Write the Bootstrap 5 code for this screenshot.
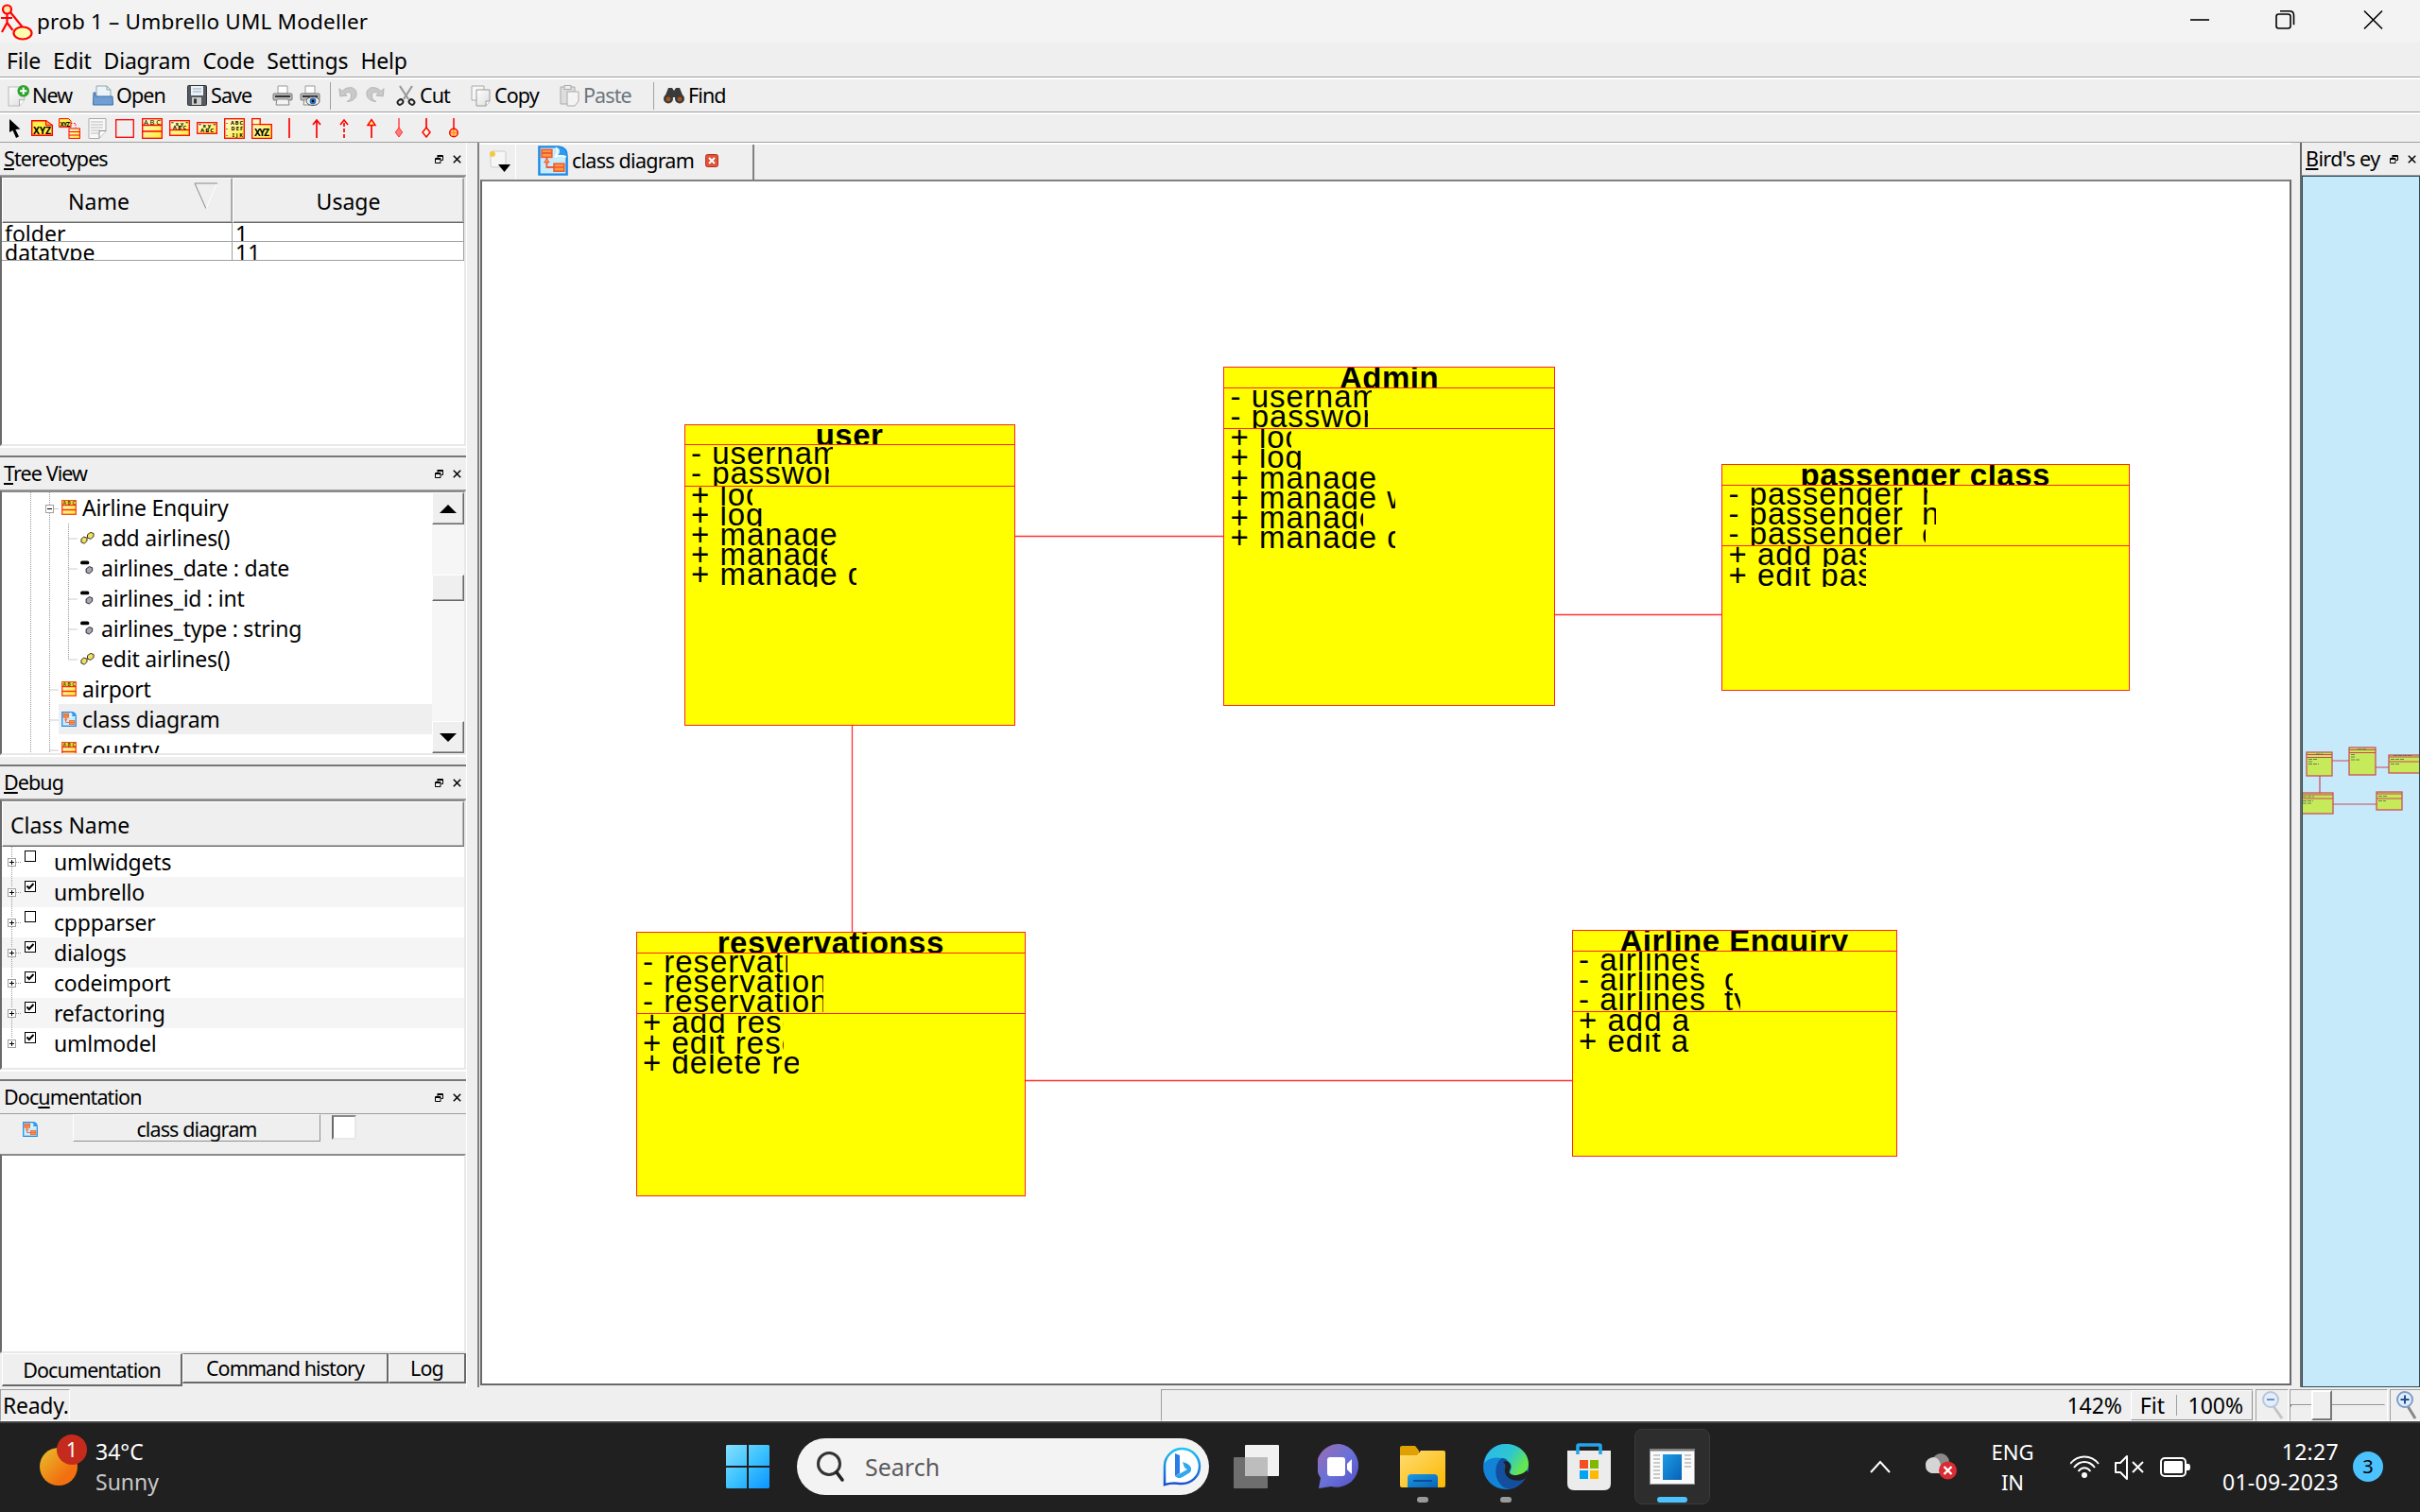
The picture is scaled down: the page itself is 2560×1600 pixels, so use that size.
<!DOCTYPE html>
<html lang="en">
<head>
<meta charset="utf-8">
<title>prob 1 – Umbrello UML Modeller</title>
<link href="https://cdn.jsdelivr.net/npm/bootstrap@5.3.0/dist/css/bootstrap.min.css" rel="stylesheet">
<style>
body{width:2560px;height:1600px;overflow:hidden;background:#efefef;color:#000;font-family:"Noto Sans","Open Sans",sans-serif;font-size:23px;line-height:32px}
svg{display:block;flex:none}
.tight{font-size:21.5px;letter-spacing:-.9px}
/* title, menu and tool bars */
.titlebar{height:45px;background:#f3f3f3}
.titlebar .caption{font-size:22.5px;letter-spacing:.2px;margin-left:4px}
.menus{height:37px;border-bottom:1px solid #a0a0a0;padding:3px 0 0 7px;gap:13px;letter-spacing:-.18px}
.bar1{height:37px;border-top:2px solid #fff;border-bottom:1px solid #a0a0a0;padding-left:8px}
.bar2{height:32px;border-top:2px solid #fff;border-bottom:1px solid #a0a0a0;padding-left:1px}
.tool{gap:4px;height:34px;flex:none}
.bar2 .tool{width:29px}
.w-new{width:90px}.w-open{width:100px}.w-save{width:90px}.w-ic{width:29px}.w-cut{width:79px}.w-copy{width:94px}.w-paste{width:99px}
.w-new,.w-open{gap:3px}
.vsep{width:1px;height:29px;background:#a0a0a0;flex:none}
#sepa{margin:0 7px 0 3px}
#sepb{margin-right:6px}
/* dock widgets */
.workarea{height:1317px}
.leftdock{width:494px;border-right:1px solid #fff;flex:none}
.dockhead{height:35px;padding:0 5px 0 4px;border-bottom:1px solid #a0a0a0;flex:none}
.dockhead .btns{gap:10px}
.sunken{border:2px solid;border-color:#8a8a8a #e8e8e8 #e8e8e8 #6a6a6a;background:#fff;width:493px;flex:none}
.split{height:12px;border-top:2px solid #fff;border-bottom:2px solid #777;flex:none}
.hdcell{background:#efefef;border:1px solid;border-color:#fff #808080 #696969 #fff;box-shadow:inset -1px -1px 0 #b0b0b0}
.hd48{height:48px;line-height:48px}
.strow{height:20px;line-height:22px;overflow:hidden;border-bottom:1px solid #a0a0a0;box-sizing:border-box}
.strow span{height:19px;overflow:hidden;padding-left:3px}
.c1{width:244px;border-right:1px solid #a0a0a0;box-sizing:border-box}
.c2{width:245px;border-right:1px solid #a0a0a0;box-sizing:border-box}
.namecol{padding-left:69px}
.trow{height:32px;padding-left:63px;gap:6px;line-height:34px;letter-spacing:-.22px}
.trow.sub{padding-left:83px;gap:7px}
.trow.sel{background:linear-gradient(#efefef,#efefef) 60px 0 no-repeat}
.scroller{width:34px;background:#f6f6f6;flex:none}
.sbtn{height:34px;background:#efefef;border:1px solid;border-color:#fff #696969 #696969 #fff;box-shadow:inset -1px -1px 0 #a0a0a0}
.thumb{height:28px}
.drow{height:32px;padding-left:6px;line-height:33px;letter-spacing:-.2px}
.drow:nth-child(even){background:#f5f5f5}
.chk{width:12px;height:12px;border:1px solid #000;margin:4px 0 0 9px;align-self:flex-start;background:#fff}
.lbl{margin-left:19px}
.raised{border:1px solid;border-color:#fff #909090 #909090 #fff;background:#efefef}
.btab{height:32px;line-height:30px;border:1px solid;border-color:#777 #696969 #696969 #fff;border-bottom-width:2px;border-right-width:2px;text-align:center}
#stereo{height:286px}
#tree{height:280px}
#thumb{margin-top:53px}
#dbg{height:286px}
#docrow{height:44px}
#docname{margin-left:37px;width:262px;height:29px;line-height:29px}
#doccheck{width:26px;height:26px;margin-left:12px;margin-top:1px}
#doctext{height:211px}
#btabs{height:38px;padding:0 0 0 2px}
#t1{width:191px;height:35px;line-height:34px;border-top-color:#fff}
#t2{width:218px}#t3{width:82px}
/* document area */
.center{width:1919px;border-left:2px solid #808080;margin-left:11px;flex:none}
.doctabs{height:39px;border-top:2px solid #fff}
.doctab{width:253px;border-left:1px solid #fff;border-right:2px solid #808080;padding:0 0 3px 23px;gap:4px;letter-spacing:-.75px}
#tabfill{width:1626px}
.board{width:1916px;height:1276px;margin-left:1px;background:#fff;border:2px solid;border-color:#808080 #696969 #696969 #696969;position:relative;flex:none}
.bird{width:127px;margin-left:9px;border-left:2px solid #696969;flex:none}
.birdview{height:1282px;background:#c7eafa;border:1px solid #2b4a57}
.bird .dockhead{padding-right:4px}
#birdtitle{white-space:nowrap;overflow:hidden;width:84px;letter-spacing:-.6px}
/* class boxes on the diagram canvas */
.uml{position:absolute;background:#ff0;border:1px solid #f22;font-family:"Liberation Sans",Arial,sans-serif;font-size:33px;letter-spacing:1px;color:#000;box-sizing:border-box;white-space:pre}
.uml h6{font-size:33px;letter-spacing:.5px;font-weight:700;line-height:21.400px;height:20.8px;margin:0;overflow:hidden;text-align:center;color:#000}
.uml div{border-top:1px solid #f22}
.uml p{margin:0;height:21.2px;line-height:18.500px;padding-left:6.500px;overflow:hidden}
.wires{position:absolute;left:0;top:0}
#u1{left:213.500px;top:256.500px;width:350px;height:319px}
#u2{left:784px;top:196px;width:351px;height:359px}
#u3{left:1311px;top:299px;width:431.500px;height:239.500px}
#u4{left:162.500px;top:794px;width:412.500px;height:280px}
#u5{left:1152.500px;top:792px;width:344px;height:239.500px}
.k71{width:71px}.k81{width:81px}.k123{width:123px}.k128{width:125px}.k133{width:133px}.k147{width:147px}.k150{width:150px}.k152{width:152px}.k154{width:155px}.k156{width:156px}.k159{width:159px}.k163{width:164px}.k167{width:169px}.k171{width:171px}.k176{width:177px}.k181{width:181px}.k197{width:197px}.k215{width:215px}.k217{width:217px}.k225{width:226px}
/* status bar */
.statusbar{height:36px;padding-top:2px;border-bottom:1px solid #fff;margin-right:-3px}
.spanel{height:34px;border:1px solid;border-color:#a0a0a0 #fff #fff #a0a0a0;flex:none}
#ready{width:74px;padding-left:2px;letter-spacing:-.3px}
#zoompanel{width:1155px;margin-right:3px;border-right:0}
#fit{width:129px;height:32px;margin-left:9px;padding:0 3px}
#fsep{height:22px}
.zic{width:35px}
#slide{width:104px;margin:0 2px 0 1px;position:relative}
#groove{width:100px;height:3px;border-width:1px}
#knob{position:absolute;left:22px;top:0;width:22px;height:32px;border-width:2px;border-color:#fff #777 #777 #fff}
/* desktop task bar */
.taskbar{height:97px;background:#202020;border-top:2px solid #444;color:#fff;padding-bottom:4px}
.cell88{width:88px;height:80px;position:relative;flex:none}
.cell88 i{position:absolute;bottom:2px;left:38px;width:12px;height:6px;border-radius:3px;background:#9a9a9a}
.activeapp{width:80px;margin:0 4px;background:#2d2d2d;border:1px solid #3a3a3a;border-radius:8px}
.activeapp i{left:23px;width:32px;background:#4cc2ff;bottom:1px}
.searchbox{width:436px;height:60px;border-radius:30px;background:#f3f3f3;color:#5c5c5c;font-size:25px;margin:0 6px 0 29px;padding:0 8px 0 20px;flex:none}
.notif{width:32px;height:32px;border-radius:50%;background:#4cc2ff;color:#000;text-align:center;font-size:20px;margin-left:15px}
.weather{width:94px;padding-left:42px}
.temp{padding-left:7px}
.sky{color:#c8c8c8}
#winlogo{margin-left:auto}
#tray{width:747px;padding-left:165px;flex:none}
#cloud{margin-left:37px}
#lang{width:60px;margin:0 31px 0 29px;font-size:22px}
#clock{width:156px;letter-spacing:.3px}
</style>
<script src="https://cdn.jsdelivr.net/npm/bootstrap@5.3.0/dist/js/bootstrap.bundle.min.js"></script>
</head>
<body>
<svg width="0" height="0" class="position-absolute" aria-hidden="true">
<defs>
<linearGradient id="gy" x1="0" y1="0" x2="1" y2="1"><stop offset="0" stop-color="#fffde0"/><stop offset="1" stop-color="#ffee2a"/></linearGradient>
<linearGradient id="gw" x1="0" y1="0" x2="1" y2="1"><stop offset="0" stop-color="#fff"/><stop offset="1" stop-color="#ddd"/></linearGradient>
<linearGradient id="gs" x1="0" y1="0" x2="1" y2="1"><stop offset="0" stop-color="#e8c22d"/><stop offset=".7" stop-color="#f2700f"/></linearGradient>
<linearGradient id="gwin" x1="0" y1="0" x2="1" y2="1"><stop offset="0" stop-color="#86e0ff"/><stop offset=".5" stop-color="#3ec3ff"/><stop offset="1" stop-color="#0a94ff"/></linearGradient>
<linearGradient id="gbl" x1="0" y1="0" x2="1" y2="1"><stop offset="0" stop-color="#1a9be6"/><stop offset="1" stop-color="#0a62b5"/></linearGradient>
<linearGradient id="gchat" x1="0" y1="0" x2="1" y2="1"><stop offset="0" stop-color="#9d6bb0"/><stop offset=".5" stop-color="#6a72d8"/><stop offset="1" stop-color="#5350c8"/></linearGradient>
<linearGradient id="gfo" x1="0" y1="0" x2="1" y2="1"><stop offset="0" stop-color="#ffdc73"/><stop offset="1" stop-color="#fbb800"/></linearGradient>
<linearGradient id="ged" x1="0" y1="0" x2="1" y2=".5"><stop offset="0" stop-color="#2fb5f0"/><stop offset=".6" stop-color="#2cc7cf"/><stop offset="1" stop-color="#66e64e"/></linearGradient>
<linearGradient id="gbing" x1="0" y1="0" x2="0" y2="1"><stop offset="0" stop-color="#1fc4f0"/><stop offset="1" stop-color="#1b4fd0"/></linearGradient>
<symbol id="float" viewBox="0 0 9 9"><path d="M3 .5h5.500v5H6.500M3 1.500h5.500M.5 3.500h5.500v5h-5.500zM.5 4.500h5.500" fill="none" stroke="#000"/><path d="M3 0v3" stroke="#000"/></symbol>
<symbol id="shut" viewBox="0 0 9 9"><path d="M.8.8l7.400 7.400M8.200.8l-7.400 7.400" stroke="#000" stroke-width="1.500"/></symbol>
<symbol id="cls" viewBox="0 0 16 16"><rect x=".7" y=".7" width="14.600" height="14.600" fill="url(#gy)" stroke="#ff4a1c" stroke-width="1.400"/><path d="M.5 5.500h15M.5 10.500h15" stroke="#ff2a1c" stroke-width="1.300"/><rect x="1" y="1" width="14" height="4" fill="#e8d83a"/><text x="1.500" y="4.900" font-size="5" font-weight="700" textLength="13" fill="#5a4a00">ABC</text></symbol>
<symbol id="dia" viewBox="0 0 16 16"><path d="M.7.7h10.300c3 .3 4.300 2.200 4.300 5v9.600H.7z" fill="#c8ecfc" stroke="#1c8ae6" stroke-width="1.200"/><path d="M10 .7c2.500 1.300 1.500 4 .2 4.800 2-.6 4-.5 5.100.5C15.300 3 13.500.9 10 .7z" fill="#2f9bf0"/><path d="M9.500 1c1.500 2 .8 3.600-.5 5 2-.9 4-.8 6 0" fill="none" stroke="#fff" stroke-width=".7"/><rect x="2" y="2.200" width="5.400" height="4" fill="#ff9a3d" stroke="#ef5b35" stroke-width=".8"/><path d="M2 4h5.400M4.700 6.200v5.300h4" stroke="#ef5b35" stroke-width=".9" fill="none"/><path d="M3.300 9l1.400-2 1.400 2z" fill="#ff9a3d" stroke="#ef5b35" stroke-width=".5"/><rect x="8.500" y="9.600" width="5.400" height="4" fill="#ff9a3d" stroke="#ef5b35" stroke-width=".8"/><path d="M8.500 11.500h5.400" stroke="#ef5b35" stroke-width=".8"/></symbol>
<symbol id="meth" viewBox="0 0 16 16"><g fill="#f5e058" stroke="#222" stroke-width="1"><path d="M1 9.500l3-2.500 3.500 1.200v3.500L4.500 14.500l-3.500-1.400z"/><path d="M8 4.500L11.500 2l3.500 1.200v3.500l-3.500 2.800L8 8.100z"/></g></symbol>
<symbol id="attr" viewBox="0 0 16 16"><rect x="0" y="0" width="10" height="4" rx="2"/><path d="M6.500 9l3.500-2.500 3.500 1.200v3.700l-3.500 3-3.500-1.400z" fill="#a6a6b8" stroke="#222" stroke-width="1"/></symbol>
<symbol id="plus" viewBox="0 0 9 9"><rect x=".5" y=".5" width="8" height="8" fill="#fff" stroke="#a0a0a0"/><path d="M2 4.500h5M4.500 2v5" stroke="#000"/></symbol>
<symbol id="tick" viewBox="0 0 10 10"><path d="M1.500 4.500l2.300 2.500L8.500 2" fill="none" stroke="#000" stroke-width="2"/></symbol>
<symbol id="printer" viewBox="0 0 22 22"><path d="M6 1h10v8H6z" fill="#fff" stroke="#999"/><rect x="1" y="9" width="20" height="7" rx="1" fill="#bbb" stroke="#777"/><rect x="3" y="11" width="16" height="2" fill="#333"/><path d="M5 15h12l1 6H4z" fill="#f4f4f4" stroke="#888"/></symbol>
<symbol id="undo" viewBox="0 0 22 22"><path d="M1 3l1 9 8-1-3-2c4-3 8-2 8 2s-2 6-5 7c7 0 11-4 11-9S17 1 12 2C9 2.300 6 4 4.500 6z" fill="#c9c9c9" stroke="#b0b0b0"/></symbol>
</defs>
</svg>

<header class="titlebar d-flex align-items-center">
<svg width="35" height="41" viewBox="0 0 35 41"><g fill="none" stroke="#f00" stroke-width="2.200"><circle cx="7.500" cy="8" r="4.500" fill="#ffe9b0"/><path d="M7.500 12.500v10M1 17h12M7.500 22L2 32M7.500 22l6 8M11 11l13 16"/><ellipse cx="24" cy="33" rx="9.500" ry="6.500" fill="#ffffb0"/></g></svg>
<span class="caption">prob 1 – Umbrello UML Modeller</span>
<svg class="ms-auto me-4" width="220" height="45" viewBox="0 0 220 45"><g fill="none" stroke="#000" stroke-width="1.600"><path d="M1 21h20"/><rect x="92" y="15" width="15" height="15" rx="2.500"/><path d="M96 11.800h10c3 0 4.500 1.600 4.500 4.500v10"/><path d="M185 11.500l19 19M204 11.500l-19 19"/></g></svg>
</header>
<nav class="menus d-flex align-items-start"><span>File</span><span>Edit</span><span>Diagram</span><span>Code</span><span>Settings</span><span>Help</span></nav>

<div class="bar1 d-flex align-items-center tight">
<span class="tool w-new d-flex align-items-center"><svg width="23" height="23" viewBox="0 0 22 22"><path d="M1 2h16v13l-5 6H1z" fill="url(#gw)" stroke="#bbb"/><path d="M12 21v-6h5" fill="#fff" stroke="#aaa"/><circle cx="16" cy="6" r="6" fill="#2aa52a"/><path d="M12.500 6h7M16 2.500v7" stroke="#fff" stroke-width="2"/></svg>New</span>
<span class="tool w-open d-flex align-items-center"><svg width="22" height="22" viewBox="0 0 22 22"><path d="M4 1h11l4 4v9H4z" fill="#eef3fa" stroke="#8aa"/><path d="M15 1v4h4" fill="none" stroke="#8aa"/><path d="M1 8h2v4h18l.5 9H.5z" fill="#6f9fd3" stroke="#3e6ea6"/></svg>Open</span>
<span class="tool w-save d-flex align-items-center"><svg width="21" height="22" viewBox="0 0 21 22"><rect x=".5" y=".5" width="20" height="21" rx="1" fill="#555a62" stroke="#333"/><rect x="4" y="1" width="13" height="10" fill="#e9f2f7"/><path d="M6 4h9M6 7h9" stroke="#9ab"/><rect x="5" y="13" width="10" height="8" fill="#ccc"/><rect x="7" y="14.500" width="3" height="5" fill="#333"/></svg>Save</span>
<span class="tool w-ic d-flex align-items-center"><svg width="22" height="22"><use href="#printer"/></svg></span>
<span class="tool w-ic d-flex align-items-center"><svg width="22" height="22" viewBox="0 0 22 22"><use href="#printer"/><ellipse cx="14" cy="17" rx="7" ry="4.500" fill="#eee" stroke="#555"/><circle cx="14" cy="17" r="3.400" fill="#2d6fb5"/><circle cx="14" cy="17" r="1.200"/></svg></span>
<span class="vsep" id="sepa"></span>
<span class="tool w-ic d-flex align-items-center"><svg width="22" height="20"><use href="#undo"/></svg></span>
<span class="tool w-ic d-flex align-items-center me-1"><svg width="22" height="20" viewBox="0 0 22 22"><g transform="matrix(-1 0 0 1 22 0)"><use href="#undo" width="22" height="22"/></g></svg></span>
<span class="tool w-cut d-flex align-items-center"><svg width="21" height="22" viewBox="0 0 21 22"><path d="M4 1l9 14M17 1L8 15" stroke="#999" stroke-width="2.200"/><g fill="none" stroke="#222" stroke-width="2"><ellipse cx="4.500" cy="18" rx="3" ry="2.500" transform="rotate(-35 4.500 18)"/><ellipse cx="16.500" cy="18" rx="3" ry="2.500" transform="rotate(35 16.500 18)"/></g></svg>Cut</span>
<span class="tool w-copy d-flex align-items-center"><svg width="21" height="23" viewBox="0 0 21 23"><path d="M1 1h13v15H1z" fill="#f7f7f7" stroke="#aaa"/><path d="M6 5h14v12l-4 5H6z" fill="url(#gw)" stroke="#999"/><path d="M16 22v-5h4" fill="#fff" stroke="#999"/></svg>Copy</span>
<span class="tool w-paste d-flex align-items-center text-secondary"><svg width="21" height="23" viewBox="0 0 21 23"><path d="M1 2h15v18H1z" fill="#ddd" stroke="#aaa"/><rect x="5" y=".5" width="7" height="4" fill="#eee" stroke="#aaa"/><path d="M8 7h12v10l-4 5H8z" fill="#f4f4f4" stroke="#aaa"/></svg>Paste</span>
<span class="vsep" id="sepb"></span>
<span class="tool d-flex align-items-center ps-1"><svg width="22" height="18" viewBox="0 0 22 18"><g fill="#3a3a3a"><path d="M5 1h4l2 3 2-3h4l4 10H1z"/><circle cx="5" cy="12.500" r="5"/><circle cx="17" cy="12.500" r="5"/></g><circle cx="5" cy="13" r="2.400" fill="#a5531a"/><circle cx="17" cy="13" r="2.400" fill="#a5531a"/></svg>Find</span>
</div>

<div class="bar2 d-flex align-items-center">
<span class="tool d-flex align-items-center justify-content-center"><svg width="14" height="20" viewBox="0 0 14 20"><path d="M1 0v14l3.500-2 3.500 8 3-1.500-3.600-7.500 5-.5z"/></svg></span>
<span class="tool d-flex align-items-center justify-content-center"><svg width="23" height="17" viewBox="0 0 23 17"><path d="M.7.7h15l6.600 5v10.600H.7z" fill="#fff04a" stroke="#f00" stroke-width="1.400"/><path d="M15.500.7v5h6.500" fill="#ff9a50" stroke="#f00"/><text x="2" y="14.500" font-size="10.500" font-weight="700" textLength="19">XYZ</text></svg></span>
<span class="tool d-flex align-items-center justify-content-center"><svg width="23" height="22" viewBox="0 0 23 22"><path d="M.6.6h10l2.400 2.500v6.500H.6z" fill="#fff04a" stroke="#f00"/><text x="1.500" y="8.500" font-size="6.500" font-weight="700" textLength="10.500">XYZ</text><path d="M13 5.500h5v5" stroke="#f00" stroke-dasharray="1.500 1.500" fill="none"/><rect x="11" y="11" width="11.400" height="10.400" fill="url(#gy)" stroke="#f00"/><path d="M11 14.500h11M11 18h11" stroke="#f00"/></svg></span>
<span class="tool d-flex align-items-center justify-content-center"><svg width="20" height="22" viewBox="0 0 20 22"><path d="M1 .5h18v13l-7 8H1z" fill="#f8f8f8" stroke="#aaa"/><path d="M3 4h13M3 7h13M3 10h13M3 13h10M3 16h8" stroke="#bbb"/><path d="M12 21v-7.500h7" fill="#fff" stroke="#888"/></svg></span>
<span class="tool d-flex align-items-center justify-content-center"><svg width="20" height="20"><rect x=".7" y=".7" width="18.600" height="18.600" fill="none" stroke="#f00" stroke-width="1.300"/></svg></span>
<span class="tool d-flex align-items-center justify-content-center"><svg width="22" height="22" viewBox="0 0 22 22"><rect x=".7" y=".7" width="20.600" height="20.600" fill="url(#gy)" stroke="#f00" stroke-width="1.300"/><path d="M1 7.500h20M1 14h20" stroke="#f00" stroke-width="1.300"/><text x="2" y="7" font-size="7.500" textLength="18">ABC</text></svg></span>
<span class="tool d-flex align-items-center justify-content-center"><svg width="22" height="17" viewBox="0 0 22 17"><rect x=".7" y=".7" width="20.600" height="15.600" fill="url(#gy)" stroke="#f00" stroke-width="1.300"/><path d="M1 10.500h20" stroke="#f00" stroke-width="1.300"/><text x="2" y="5.500" font-size="5.500" font-weight="700" textLength="18">"xy"</text><text x="4" y="9.600" font-size="5.500" font-weight="700" textLength="14">ABC</text></svg></span>
<span class="tool d-flex align-items-center justify-content-center"><svg width="22" height="13" viewBox="0 0 22 13"><rect x=".7" y=".7" width="20.600" height="11.600" fill="url(#gy)" stroke="#f00" stroke-width="1.300"/><text x="2" y="6" font-size="6" font-weight="700" textLength="18">"xy"</text><text x="4" y="11.300" font-size="6" font-weight="700" textLength="14">ABC</text></svg></span>
<span class="tool d-flex align-items-center justify-content-center"><svg width="22" height="22" viewBox="0 0 22 22"><rect x=".7" y=".7" width="20.600" height="20.600" fill="url(#gy)" stroke="#f00" stroke-width="1.300"/><g font-size="5.500" font-weight="700"><text x="2" y="6.500" textLength="18">- ABC</text><text x="2" y="13" textLength="18">- DEF</text><text x="2" y="19.500" textLength="18">- IJK</text></g></svg></span>
<span class="tool d-flex align-items-center justify-content-center"><svg width="22" height="22" viewBox="0 0 22 22"><path d="M.7.7h8.500v6h12.100v14.600H.7z" fill="url(#gy)" stroke="#f00" stroke-width="1.300"/><path d="M.7 6.700h9" stroke="#f00"/><text x="3" y="18.500" font-size="10" font-weight="700" textLength="16">XYZ</text></svg></span>
<span class="tool d-flex align-items-center justify-content-center"><svg width="12" height="21"><path d="M6 0v21" stroke="#f00" stroke-width="1.700"/></svg></span>
<span class="tool d-flex align-items-center justify-content-center"><svg width="12" height="21"><path d="M6 21V2M2 7l4-5 4 5" stroke="#f00" stroke-width="1.700" fill="none"/></svg></span>
<span class="tool d-flex align-items-center justify-content-center"><svg width="12" height="21"><path d="M6 21V2" stroke="#f00" stroke-width="1.700" stroke-dasharray="4 2"/><path d="M2 7l4-5 4 5" stroke="#f00" stroke-width="1.700" fill="none"/></svg></span>
<span class="tool d-flex align-items-center justify-content-center"><svg width="12" height="21"><path d="M6 21V7" stroke="#f00" stroke-width="1.700"/><path d="M2 7.500l4-6 4 6z" stroke="#f00" stroke-width="1.500" fill="#ff6"/></svg></span>
<span class="tool d-flex align-items-center justify-content-center"><svg width="12" height="21"><path d="M6 0v11" stroke="#f44" stroke-width="1.500"/><path d="M6 10l3.700 5L6 20l-3.700-5z" stroke="#f33" fill="#ff7a7a"/></svg></span>
<span class="tool d-flex align-items-center justify-content-center"><svg width="12" height="21"><path d="M6 0v11" stroke="#f00" stroke-width="1.700"/><path d="M6 10l4 5-4 5-4-5z" stroke="#f00" stroke-width="1.500" fill="#ffd"/></svg></span>
<span class="tool d-flex align-items-center justify-content-center"><svg width="12" height="21"><path d="M6 0v20M2 15.500h8" stroke="#f00" stroke-width="1.500"/><circle cx="6" cy="15.500" r="4.300" stroke="#f00" stroke-width="1.400" fill="#ffcf40" fill-opacity=".7"/></svg></span>
</div>

<main class="workarea d-flex">
<aside class="leftdock d-flex flex-column">
  <div class="dockhead d-flex align-items-center justify-content-between tight"><span><u>S</u>tereotypes</span><span class="btns d-flex"><svg width="9" height="9"><use href="#float"/></svg><svg width="9" height="9"><use href="#shut"/></svg></span></div>
  <div class="sunken" id="stereo">
    <div class="d-flex hd48"><div class="hdcell c1 namecol d-flex justify-content-between"><span>Name</span><svg class="me-2" width="34" height="44"><path d="M3 5h24" stroke="#888"/><path d="M3 5l12 27" stroke="#888"/><path d="M15 32L26 6" stroke="#fff"/></svg></div><div class="hdcell c2 text-center">Usage</div></div>
    <div class="strow d-flex"><span class="c1">folder</span><span class="c2">1</span></div>
    <div class="strow d-flex"><span class="c1">datatype</span><span class="c2">11</span></div>
  </div>
  <div class="split"></div>
  <div class="dockhead d-flex align-items-center justify-content-between tight"><span><u>T</u>ree View</span><span class="btns d-flex"><svg width="9" height="9"><use href="#float"/></svg><svg width="9" height="9"><use href="#shut"/></svg></span></div>
  <div class="sunken d-flex overflow-hidden" id="tree">
    <div class="flex-grow-1 position-relative">
      <svg class="position-absolute top-0 start-0" width="90" height="276"><g fill="none" stroke="#999" stroke-dasharray="1 1"><path d="M30.500 0v276M50.500 0v276M70.500 33v144M70.500 49h10M70.500 81h10M70.500 113h10M70.500 145h10M70.500 177h10M50.500 17.500h10M50.500 209h10M50.500 241h10M50.500 273h10"/></g><rect x="46.500" y="13.500" width="8" height="8" fill="#fff" stroke="#a0a0a0"/><path d="M48 17.500h5" stroke="#000"/></svg>
      <div class="trow d-flex align-items-center"><svg width="16" height="16"><use href="#cls"/></svg>Airline Enquiry</div>
      <div class="trow sub d-flex align-items-center"><svg width="15" height="16"><use href="#meth"/></svg>add airlines()</div>
      <div class="trow sub d-flex align-items-center"><svg width="15" height="16"><use href="#attr"/></svg>airlines_date : date</div>
      <div class="trow sub d-flex align-items-center"><svg width="15" height="16"><use href="#attr"/></svg>airlines_id : int</div>
      <div class="trow sub d-flex align-items-center"><svg width="15" height="16"><use href="#attr"/></svg>airlines_type : string</div>
      <div class="trow sub d-flex align-items-center"><svg width="15" height="16"><use href="#meth"/></svg>edit airlines()</div>
      <div class="trow d-flex align-items-center"><svg width="16" height="16"><use href="#cls"/></svg>airport</div>
      <div class="trow sel d-flex align-items-center"><svg width="16" height="16"><use href="#dia"/></svg>class diagram</div>
      <div class="trow d-flex align-items-center"><svg width="16" height="16"><use href="#cls"/></svg>country</div>
    </div>
    <div class="scroller d-flex flex-column">
      <div class="sbtn d-flex align-items-center justify-content-center"><svg width="18" height="9"><path d="M0 9l9-9 9 9z"/></svg></div>
      <div class="sbtn thumb" id="thumb"></div>
      <div class="sbtn mt-auto d-flex align-items-center justify-content-center"><svg width="18" height="9"><path d="M0 0l9 9 9-9z"/></svg></div>
    </div>
  </div>
  <div class="split"></div>
  <div class="dockhead d-flex align-items-center justify-content-between tight"><span><u>D</u>ebug</span><span class="btns d-flex"><svg width="9" height="9"><use href="#float"/></svg><svg width="9" height="9"><use href="#shut"/></svg></span></div>
  <div class="sunken" id="dbg">
    <div class="hdcell hd48 ps-2">Class Name</div>
    <div class="position-relative">
      <div class="drow d-flex align-items-center"><svg width="9" height="9"><use href="#plus"/></svg><span class="chk"></span><span class="lbl">umlwidgets</span></div>
      <div class="drow d-flex align-items-center"><svg width="9" height="9"><use href="#plus"/></svg><span class="chk"><svg width="10" height="10"><use href="#tick"/></svg></span><span class="lbl">umbrello</span></div>
      <div class="drow d-flex align-items-center"><svg width="9" height="9"><use href="#plus"/></svg><span class="chk"></span><span class="lbl">cppparser</span></div>
      <div class="drow d-flex align-items-center"><svg width="9" height="9"><use href="#plus"/></svg><span class="chk"><svg width="10" height="10"><use href="#tick"/></svg></span><span class="lbl">dialogs</span></div>
      <div class="drow d-flex align-items-center"><svg width="9" height="9"><use href="#plus"/></svg><span class="chk"><svg width="10" height="10"><use href="#tick"/></svg></span><span class="lbl">codeimport</span></div>
      <div class="drow d-flex align-items-center"><svg width="9" height="9"><use href="#plus"/></svg><span class="chk"><svg width="10" height="10"><use href="#tick"/></svg></span><span class="lbl">refactoring</span></div>
      <div class="drow d-flex align-items-center"><svg width="9" height="9"><use href="#plus"/></svg><span class="chk"><svg width="10" height="10"><use href="#tick"/></svg></span><span class="lbl">umlmodel</span></div>
      <svg class="position-absolute top-0 start-0" width="22" height="204"><path d="M10.500 0v11M10.500 21v22M10.500 53v22M10.500 85v22M10.500 117v22M10.500 149v22M10.500 181v22M15 16.500h5M15 48.500h5M15 80.500h5M15 112.500h5M15 144.500h5M15 176.500h5" stroke="#999" stroke-dasharray="1 1"/></svg>
    </div>
  </div>
  <div class="split"></div>
  <div class="dockhead d-flex align-items-center justify-content-between tight"><span>Doc<u>u</u>mentation</span><span class="btns d-flex"><svg width="9" height="9"><use href="#float"/></svg><svg width="9" height="9"><use href="#shut"/></svg></span></div>
  <div class="d-flex align-items-start tight" id="docrow"><svg class="ms-4 mt-2" width="16" height="16"><use href="#dia"/></svg><div class="raised text-center" id="docname">class diagram</div><div class="sunken" id="doccheck"></div></div>
  <div class="sunken" id="doctext"></div>
  <div class="d-flex align-items-start tight" id="btabs"><div class="btab" id="t1">Documentation</div><div class="btab" id="t2">Command history</div><div class="btab" id="t3">Log</div></div>
</aside>

<section class="center">
  <div class="doctabs d-flex align-items-center">
    <svg class="ms-2 me-auto" width="30" height="30" viewBox="0 0 30 30"><rect x="4" y="3" width="16" height="17" rx="2" fill="#f6f6f6" stroke="#ccc"/><circle cx="6" cy="6" r="3" fill="#f5c842"/><path d="M12 17h13l-6.500 8z"/></svg>
    <div class="doctab d-flex align-items-center h-100 tight"><svg width="32" height="32"><use href="#dia"/></svg>class diagram<svg class="ms-2" width="14" height="14"><rect x=".5" y=".5" width="13" height="13" rx="2" fill="#e0533a" stroke="#b8341f"/><path d="M4 4l6 6M10 4l-6 6" stroke="#fff" stroke-width="2"/></svg></div>
    <div id="tabfill"></div>
  </div>
  <div class="board">
    <svg class="wires" width="1910" height="1270"><g stroke="#f33" stroke-width="1.300"><path d="M563 375.500h221M1135 458.500h176M391.500 575v219M575 951.500h578"/></g></svg>
    <div class="uml" id="u1"><h6>user</h6><div><p class="k156">- username</p><p class="k152">- password</p></div><div><p class="k71">+ login()</p><p class="k81">+ logout()</p><p class="k163">+ manage</p><p class="k150">+ manage</p><p class="k181">+ manage d</p></div></div>
    <div class="uml" id="u2"><h6>Admin</h6><div><p class="k156">- username</p><p class="k152">- password</p></div><div><p class="k71">+ login()</p><p class="k81">+ logout()</p><p class="k163">+ manage</p><p class="k181">+ manage w</p><p class="k147">+ manage</p><p class="k181">+ manage d</p></div></div>
    <div class="uml" id="u3"><h6>passenger class</h6><div><p class="k217">- passenger_name</p><p class="k225">- passenger_number</p><p class="k215">- passenger_email</p></div><div><p class="k152">+ add passenger</p><p class="k152">+ edit passenger</p></div></div>
    <div class="uml" id="u4"><h6>resvervationss</h6><div><p class="k159">- reservation_</p><p class="k197">- reservation_</p><p class="k197">- reservation_</p></div><div><p class="k154">+ add reservation</p><p class="k154">+ edit reservation</p><p class="k171">+ delete reservation</p></div></div>
    <div class="uml" id="u5"><h6>Airline Enquiry</h6><div><p class="k133">- airlines_id</p><p class="k167">- airlines_date</p><p class="k176">- airlines_type</p></div><div><p class="k123">+ add airlines</p><p class="k128">+ edit airlines</p></div></div>
  </div>
</section>

<aside class="bird">
  <div class="dockhead d-flex align-items-center justify-content-between tight"><span id="birdtitle"><u>B</u>ird's ey</span><span class="btns d-flex"><svg width="9" height="9"><use href="#float"/></svg><svg width="9" height="9"><use href="#shut"/></svg></span></div>
  <div class="birdview"><svg width="123" height="1278"><g fill="#c6ea5a" stroke="#cc4458" stroke-width="1.200"><path fill="none" d="M31 618h18M77 625h14M18 633v19M31 664h48"/><rect x="4" y="609" width="27" height="25"/><rect x="49" y="604" width="28" height="29"/><rect x="91" y="612" width="34" height="19"/><rect x="-1" y="652" width="33" height="22"/><rect x="78" y="651" width="27" height="19"/><path d="M4 611.500h27M4 614.500h27M49 606.500h28M49 609.500h28M91 614h32M91 619h32M0 654h32M0 658h32M78 653h27M78 658h27"/></g><g stroke="#4a6a55" stroke-width="1" stroke-dasharray="4 1" opacity=".8"><path d="M6 616.500h9M6 619h5M6 621.500h11M14 611h7M51 611.500h4M51 614h4M51 617h10M58 606h9M93 616.500h15M93 621.500h9M0 656h12M0 660.500h11M0 663h10M80 655.500h9M80 660.500h8M96 612.500h20"/></g></svg></div>
</aside>
</main>

<footer class="statusbar d-flex">
  <div class="spanel" id="ready">Ready.</div>
  <div class="spanel d-flex align-items-center justify-content-end ms-auto" id="zoompanel"><span>142%</span><span class="raised d-flex align-items-center justify-content-around" id="fit"><span>Fit</span><span class="vsep" id="fsep"></span><span>100%</span></span></div>
  <div class="spanel zic"><svg width="31" height="32" viewBox="0 0 31 32"><path d="M18 17l9 13" stroke="#c4c4c4" stroke-width="3"/><circle cx="15" cy="10" r="8" fill="#e3eefa" stroke="#b7c6dc" stroke-width="2"/><path d="M11 10h8" stroke="#6d94c9" stroke-width="2"/></svg></div>
  <div class="spanel d-flex align-items-center" id="slide"><div id="groove" class="sunken"></div><div class="raised" id="knob"></div></div>
  <div class="spanel zic"><svg width="31" height="32" viewBox="0 0 31 32"><path d="M18 17l8 13" stroke="#888" stroke-width="3"/><circle cx="15" cy="10" r="8" fill="#dfeeff" stroke="#7f9cc4" stroke-width="2"/><path d="M10.500 10h9M15 5.500v9" stroke="#1e4f94" stroke-width="2"/></svg></div>
</footer>
<div class="taskbar d-flex align-items-center">
  <div class="weather"><svg width="52" height="70" viewBox="0 0 52 70"><circle cx="20" cy="35" r="20" fill="url(#gs)"/><circle cx="34" cy="17" r="16" fill="#c42b1c"/><text x="34" y="25" font-size="21" fill="#fff" text-anchor="middle">1</text></svg></div>
  <div class="temp"><div>34°C</div><div class="sky">Sunny</div></div>
  <svg id="winlogo" width="46" height="46" viewBox="0 0 46 46"><path fill="url(#gwin)" d="M1 0h21v22H0V1zM24 0h21l1 1v21H24zM0 24h22v22H1l-1-1zM24 24h22v21l-1 1H24z"/></svg>
  <div class="searchbox d-flex align-items-center"><svg width="32" height="34" viewBox="0 0 32 34"><circle cx="14" cy="14" r="11.500" fill="none" stroke="#333" stroke-width="3"/><path d="M22 23l6 8" stroke="#222" stroke-width="3.600" stroke-linecap="round"/></svg><span class="ms-3 ps-1">Search</span>
  <svg class="ms-auto" width="42" height="44" viewBox="0 0 42 44"><path d="M3 41V21A18.500 18.500 0 1 1 21 40c-6 0-8-2-18 1z" fill="#fff" stroke="url(#gbing)" stroke-width="2.500"/><path d="M14 8l5 2v19l-5 3z" fill="#2a7be8"/><path d="M14 32c3 3 6 2 8 1l8-5c3-4 0-9-8-11l2 6 3 2-9 5z" fill="#2fa8ee"/></svg></div>
  <div class="cell88 d-flex align-items-center justify-content-center"><svg width="48" height="46" viewBox="0 0 48 46"><rect x="12" y="0" width="36" height="33" rx="1" fill="#f1f1f1"/><rect x="0" y="13" width="36" height="33" rx="1" fill="#888" fill-opacity=".75"/><rect x="12" y="13" width="24" height="20" fill="#bdbdbd"/></svg></div>
  <div class="cell88 d-flex align-items-center justify-content-center"><svg width="46" height="48" viewBox="0 0 46 48"><path d="M23 0a23 23 0 1 1-9 45L1 47l2-11A23 23 0 0 1 23 0z" fill="url(#gchat)"/><rect x="10" y="14" width="19" height="20" rx="3" fill="#fff"/><path d="M31 21l5-5v16l-5-5z" fill="#fff"/></svg></div>
  <div class="cell88 d-flex align-items-center justify-content-center"><svg width="48" height="44" viewBox="0 0 48 44"><path d="M0 2q0-2 2-2h14l4 5v8H0z" fill="#dfa000"/><path d="M0 10h18l4-5h24q2 0 2 2v35q0 2-2 2H2q-2 0-2-2z" fill="url(#gfo)"/><path d="M8 44V34q0-4 4-4h24q4 0 4 4v10z" fill="url(#gbl)"/><path d="M14 37h20" stroke="#0a4f94" stroke-width="2"/></svg><i></i></div>
  <div class="cell88 d-flex align-items-center justify-content-center"><svg width="48" height="50" viewBox="0 0 48 50"><circle cx="24" cy="25" r="24" fill="#1383d8"/><path d="M1 22C3 8 13 1 24 1c14 0 24 10 24 21 0 8-6 12-13 12-5 0-8-2-6-5 3-5-1-12-10-13C10 14 3 18 1 22z" fill="url(#ged)"/><path d="M20 16c-10 6-9 26 4 32 9 1 17-4 20-11-9 5-20 1-20-8 0-5 3-6 2-9-1-3-3-4-6-4z" fill="#124f9e"/><path d="M21 20c3-2 9 0 8 6-1 3-2 4-1 6 3 4 13 2 18-3l2 3-4 6c-8 4-19 1-21-7-1-5 3-7-2-11z" fill="#202020"/></svg><i></i></div>
  <div class="cell88 d-flex align-items-center justify-content-center"><svg width="46" height="50" viewBox="0 0 46 50"><path d="M0 8h46v35q0 7-7 7H7q-7 0-7-7z" fill="#ececec"/><path d="M11 12V3q0-1 1-1h22q1 0 1 1v9" fill="none" stroke="#22a6ea" stroke-width="3.600"/><path fill="#f25022" d="M13 18h9v9h-9z"/><path fill="#7fba00" d="M24 18h9v9h-9z"/><path fill="#00a4ef" d="M13 29h9v9h-9z"/><path fill="#ffb900" d="M24 29h9v9h-9z"/></svg></div>
  <div class="cell88 activeapp d-flex align-items-center justify-content-center"><svg width="48" height="38" viewBox="0 0 48 38"><rect x=".5" y=".5" width="47" height="37" fill="#fafafa" stroke="#999"/><path d="M0 1.500h48" stroke="#777" stroke-width="2"/><rect x="14" y="6" width="20" height="27" fill="url(#gbl)"/><path d="M4 7h7M4 11h7M4 15h7M4 19h7M4 23h7M4 27h7M4 31h7M37 7h7M37 11h7M37 15h7M37 19h7" stroke="#999"/></svg><i></i></div>
  <div id="tray" class="d-flex align-items-center">
    <svg width="22" height="14"><path d="M1 13L11 2l10 11" fill="none" stroke="#fff" stroke-width="2"/></svg>
    <svg id="cloud" width="33" height="28" viewBox="0 0 33 28"><circle cx="16" cy="9" r="9" fill="#8a8a8a"/><path d="M0 13a8 8 0 0 1 14-6l6 14H6q-6-2-6-8z" fill="#d5d5d5"/><circle cx="23.500" cy="18" r="9.500" fill="#d92c33"/><path d="M19.500 14l8 8M27.500 14l-8 8" stroke="#fff" stroke-width="2.400"/></svg>
    <div id="lang" class="text-center">ENG<br>IN</div>
    <svg width="128" height="30" viewBox="0 0 128 30"><g fill="none" stroke="#fff" stroke-width="2"><path d="M0 12C8 2 22 2 30 12M4 16c6-8 16-8 22 0M8.500 20c4-5 9-5 13 0"/><path d="M48 11h5l7-7v24l-7-7h-5z" stroke-linejoin="round"/><path d="M66 10l11 11M77 10L66 21"/><rect x="96" y="6" width="26" height="19" rx="4"/></g><circle cx="15" cy="24" r="3" fill="#fff"/><rect x="99" y="9" width="20" height="13" rx="1.500" fill="#fff"/><path d="M123 12h2q2 0 2 3.500t-2 3.500h-2z" fill="#fff"/></svg>
    <div id="clock" class="text-end">12:27<br>01-09-2023</div>
    <div class="notif">3</div>
  </div>
</div>
</body>
</html>
